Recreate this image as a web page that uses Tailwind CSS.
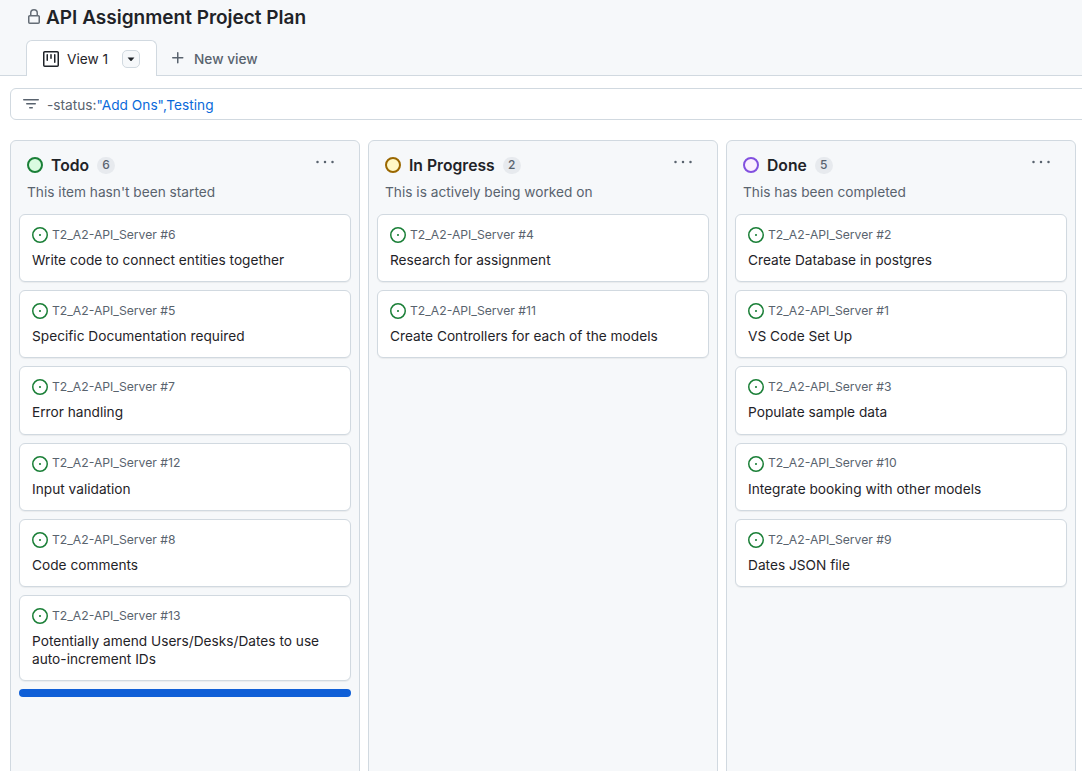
<!DOCTYPE html>
<html><head><meta charset="utf-8"><script src="https://cdn.jsdelivr.net/npm/@tailwindcss/browser@4"></script></head>
<body class="m-0 h-[771px] w-[1082px] overflow-hidden bg-white font-['Inter',sans-serif] text-[#1f2328]">
<header class="h-[76px] border-b border-[#d1d9e0] bg-[#f6f8fa]">
  <div class="flex h-[40px] items-start pl-[26px] pt-[4px]">
    <svg class="mt-[5px] h-[16px] w-[16px] text-[#656d76]" viewBox="0 0 16 16" fill="currentColor"><path d="M4 4a4 4 0 0 1 8 0v2h.25c.966 0 1.75.784 1.75 1.75v5.5A1.75 1.75 0 0 1 12.25 15h-8.5A1.75 1.75 0 0 1 2 13.25v-5.5C2 6.784 2.784 6 3.75 6H4Zm6.5 2V4a2.5 2.5 0 1 0-5 0v2ZM3.5 7.75v5.5c0 .138.112.25.25.25h8.5a.25.25 0 0 0 .25-.25v-5.5a.25.25 0 0 0-.25-.25h-8.5a.25.25 0 0 0-.25.25Z"/></svg>
    <h1 class="ml-[4px] text-[19px] leading-[28px] font-semibold">API Assignment Project Plan</h1>
  </div>
  <div class="flex h-[36px] pl-[26px]">
    <div class="flex h-[36px] w-[131px] items-center rounded-t-[6px] border border-b-0 border-[#d1d9e0] bg-white pl-[16px]">
      <svg class="h-[16px] w-[16px] text-[#1f2328]" viewBox="0 0 16 16" fill="currentColor"><path d="M0 1.75C0 .784.784 0 1.75 0h12.5C15.216 0 16 .784 16 1.75v12.5A1.75 1.75 0 0 1 14.25 16H1.75A1.75 1.75 0 0 1 0 14.25Zm1.75-.25a.25.25 0 0 0-.25.25v12.5c0 .138.112.25.25.25h12.5a.25.25 0 0 0 .25-.25V1.75a.25.25 0 0 0-.25-.25ZM11.75 3a.75.75 0 0 1 .75.75v7.5a.75.75 0 0 1-1.5 0v-7.5a.75.75 0 0 1 .75-.75Zm-8.25.75a.75.75 0 0 1 1.5 0v5.5a.75.75 0 0 1-1.5 0ZM8 3a.75.75 0 0 1 .75.75v3.5a.75.75 0 0 1-1.5 0v-3.5A.75.75 0 0 1 8 3Z"/></svg>
      <span class="ml-[8px] text-[13.7px] leading-[20px]">View 1</span>
      <span class="ml-[14px] flex h-[18px] w-[18px] items-center justify-center rounded-[5px] border border-[#d1d9e0] bg-[#f6f8fa]">
        <svg class="h-[8px] w-[8px] text-[#1f2328]" viewBox="0 0 8 8" fill="currentColor"><path d="M0.6 2.4h6.8L4.4 6h-.8Z"/></svg>
      </span>
    </div>
    <div class="ml-[13px] flex items-center text-[#59636e]">
      <svg class="h-[16px] w-[16px]" viewBox="0 0 16 16" fill="currentColor"><path d="M7.75 2a.75.75 0 0 1 .75.75V7h4.25a.75.75 0 0 1 0 1.5H8.5v4.25a.75.75 0 0 1-1.5 0V8.5H2.75a.75.75 0 0 1 0-1.5H7V2.75A.75.75 0 0 1 7.75 2Z"/></svg>
      <span class="ml-[8px] mt-[2px] text-[13.7px] leading-[20px] font-medium">New view</span>
    </div>
  </div>
</header>
<div class="ml-[10px] mt-[12px] flex h-[32px] w-[1100px] items-center rounded-[6px] border border-[#d1d9e0] bg-white pl-[12px]">
  <svg class="h-[16px] w-[16px] text-[#59636e]" viewBox="0 0 16 16" fill="currentColor"><path d="M.75 3h14.5a.75.75 0 0 1 0 1.5H.75a.75.75 0 0 1 0-1.5ZM3 7.75A.75.75 0 0 1 3.75 7h8.5a.75.75 0 0 1 0 1.5h-8.5A.75.75 0 0 1 3 7.75Zm3 4a.75.75 0 0 1 .75-.75h2.5a.75.75 0 0 1 0 1.5h-2.5a.75.75 0 0 1-.75-.75Z"/></svg>
  <span class="ml-[8px] mt-[2px] text-[13.7px] leading-[20px] text-[#59636e]">-status:<span class="text-[#0969da]">"Add Ons",Testing</span></span>
</div>
<main class="ml-[10px] mt-[20px] flex h-[640px] gap-[8px]">

  <section class="h-[660px] w-[350px] shrink-0 rounded-[6px] border border-[#d1d9e0] bg-[#f6f8fa] px-[8px]">
    <div class="relative box-content flex h-[36px] items-center pl-[8px] pt-[6px]">
      <span class="h-[16px] w-[16px] rounded-full border-2 border-[#1a7f37] bg-[#dafbe1]"></span>
      <span class="ml-[8px] mt-[2px] text-[15.7px] leading-[24px] font-semibold">Todo</span>
      <span class="ml-[8px] flex h-[17px] min-w-[18px] items-center justify-center rounded-full bg-[#e7eaee] px-[5px] text-[12px] font-medium text-[#59636e]">6</span>
      <svg class="absolute right-[17px] top-[13px] h-[16px] w-[18px] text-[#59636e]" viewBox="-1 0 18 16" fill="currentColor"><circle cx="0.5" cy="8" r="1.25"/><circle cx="8" cy="8" r="1.25"/><circle cx="15.5" cy="8" r="1.25"/></svg>
    </div>
    <p class="ml-[8px] mt-[-1px] text-[13.7px] leading-[20px] text-[#59636e]">This item hasn't been started</p>
    <div class="mt-[12px] flex flex-col gap-[8px]">
      <article class="h-[68.2px] rounded-[6px] border border-[#d1d9e0] bg-white px-[12px] pt-[10px] shadow-[0_1px_1px_rgba(31,35,40,0.06)]">
        <div class="flex h-[20px] items-center text-[12.2px] text-[#59636e]"><svg class="h-[16px] w-[16px] text-[#1a7f37]" viewBox="0 0 16 16" fill="currentColor"><path d="M8 9.5a1.5 1.5 0 1 0 0-3 1.5 1.5 0 0 0 0 3Z" transform="translate(8 8) scale(.7) translate(-8 -8)"/><path d="M8 0a8 8 0 1 1 0 16A8 8 0 0 1 8 0ZM1.5 8a6.5 6.5 0 1 0 13 0 6.5 6.5 0 0 0-13 0Z"/></svg><span class="ml-[4px]">T2_A2-API_Server #6</span></div>
        <p class="mt-[6px] text-[13.7px] leading-[18px]">Write code to connect entities together</p>
      </article>
      <article class="h-[68.2px] rounded-[6px] border border-[#d1d9e0] bg-white px-[12px] pt-[10px] shadow-[0_1px_1px_rgba(31,35,40,0.06)]">
        <div class="flex h-[20px] items-center text-[12.2px] text-[#59636e]"><svg class="h-[16px] w-[16px] text-[#1a7f37]" viewBox="0 0 16 16" fill="currentColor"><path d="M8 9.5a1.5 1.5 0 1 0 0-3 1.5 1.5 0 0 0 0 3Z" transform="translate(8 8) scale(.7) translate(-8 -8)"/><path d="M8 0a8 8 0 1 1 0 16A8 8 0 0 1 8 0ZM1.5 8a6.5 6.5 0 1 0 13 0 6.5 6.5 0 0 0-13 0Z"/></svg><span class="ml-[4px]">T2_A2-API_Server #5</span></div>
        <p class="mt-[6px] text-[13.7px] leading-[18px]">Specific Documentation required</p>
      </article>
      <article class="h-[68.2px] rounded-[6px] border border-[#d1d9e0] bg-white px-[12px] pt-[10px] shadow-[0_1px_1px_rgba(31,35,40,0.06)]">
        <div class="flex h-[20px] items-center text-[12.2px] text-[#59636e]"><svg class="h-[16px] w-[16px] text-[#1a7f37]" viewBox="0 0 16 16" fill="currentColor"><path d="M8 9.5a1.5 1.5 0 1 0 0-3 1.5 1.5 0 0 0 0 3Z" transform="translate(8 8) scale(.7) translate(-8 -8)"/><path d="M8 0a8 8 0 1 1 0 16A8 8 0 0 1 8 0ZM1.5 8a6.5 6.5 0 1 0 13 0 6.5 6.5 0 0 0-13 0Z"/></svg><span class="ml-[4px]">T2_A2-API_Server #7</span></div>
        <p class="mt-[6px] text-[13.7px] leading-[18px]">Error handling</p>
      </article>
      <article class="h-[68.2px] rounded-[6px] border border-[#d1d9e0] bg-white px-[12px] pt-[10px] shadow-[0_1px_1px_rgba(31,35,40,0.06)]">
        <div class="flex h-[20px] items-center text-[12.2px] text-[#59636e]"><svg class="h-[16px] w-[16px] text-[#1a7f37]" viewBox="0 0 16 16" fill="currentColor"><path d="M8 9.5a1.5 1.5 0 1 0 0-3 1.5 1.5 0 0 0 0 3Z" transform="translate(8 8) scale(.7) translate(-8 -8)"/><path d="M8 0a8 8 0 1 1 0 16A8 8 0 0 1 8 0ZM1.5 8a6.5 6.5 0 1 0 13 0 6.5 6.5 0 0 0-13 0Z"/></svg><span class="ml-[4px]">T2_A2-API_Server #12</span></div>
        <p class="mt-[6px] text-[13.7px] leading-[18px]">Input validation</p>
      </article>
      <article class="h-[68.2px] rounded-[6px] border border-[#d1d9e0] bg-white px-[12px] pt-[10px] shadow-[0_1px_1px_rgba(31,35,40,0.06)]">
        <div class="flex h-[20px] items-center text-[12.2px] text-[#59636e]"><svg class="h-[16px] w-[16px] text-[#1a7f37]" viewBox="0 0 16 16" fill="currentColor"><path d="M8 9.5a1.5 1.5 0 1 0 0-3 1.5 1.5 0 0 0 0 3Z" transform="translate(8 8) scale(.7) translate(-8 -8)"/><path d="M8 0a8 8 0 1 1 0 16A8 8 0 0 1 8 0ZM1.5 8a6.5 6.5 0 1 0 13 0 6.5 6.5 0 0 0-13 0Z"/></svg><span class="ml-[4px]">T2_A2-API_Server #8</span></div>
        <p class="mt-[6px] text-[13.7px] leading-[18px]">Code comments</p>
      </article>
      <article class="h-[86px] rounded-[6px] border border-[#d1d9e0] bg-white px-[12px] pt-[10px] shadow-[0_1px_1px_rgba(31,35,40,0.06)]">
        <div class="flex h-[20px] items-center text-[12.2px] text-[#59636e]"><svg class="h-[16px] w-[16px] text-[#1a7f37]" viewBox="0 0 16 16" fill="currentColor"><path d="M8 9.5a1.5 1.5 0 1 0 0-3 1.5 1.5 0 0 0 0 3Z" transform="translate(8 8) scale(.7) translate(-8 -8)"/><path d="M8 0a8 8 0 1 1 0 16A8 8 0 0 1 8 0ZM1.5 8a6.5 6.5 0 1 0 13 0 6.5 6.5 0 0 0-13 0Z"/></svg><span class="ml-[4px]">T2_A2-API_Server #13</span></div>
        <p class="mt-[6px] text-[13.7px] leading-[18px]">Potentially amend Users/Desks/Dates to use auto-increment IDs</p>
      </article>
      <div class="h-[8px] rounded-[6px] bg-[#0f5fd7]"></div>
    </div>
  </section>

  <section class="h-[660px] w-[350px] shrink-0 rounded-[6px] border border-[#d1d9e0] bg-[#f6f8fa] px-[8px]">
    <div class="relative box-content flex h-[36px] items-center pl-[8px] pt-[6px]">
      <span class="h-[16px] w-[16px] rounded-full border-2 border-[#9a6700] bg-[#fff8c5]"></span>
      <span class="ml-[8px] mt-[2px] text-[15.7px] leading-[24px] font-semibold">In Progress</span>
      <span class="ml-[8px] flex h-[17px] min-w-[18px] items-center justify-center rounded-full bg-[#e7eaee] px-[5px] text-[12px] font-medium text-[#59636e]">2</span>
      <svg class="absolute right-[17px] top-[13px] h-[16px] w-[18px] text-[#59636e]" viewBox="-1 0 18 16" fill="currentColor"><circle cx="0.5" cy="8" r="1.25"/><circle cx="8" cy="8" r="1.25"/><circle cx="15.5" cy="8" r="1.25"/></svg>
    </div>
    <p class="ml-[8px] mt-[-1px] text-[13.7px] leading-[20px] text-[#59636e]">This is actively being worked on</p>
    <div class="mt-[12px] flex flex-col gap-[8px]">
      <article class="h-[68.2px] rounded-[6px] border border-[#d1d9e0] bg-white px-[12px] pt-[10px] shadow-[0_1px_1px_rgba(31,35,40,0.06)]">
        <div class="flex h-[20px] items-center text-[12.2px] text-[#59636e]"><svg class="h-[16px] w-[16px] text-[#1a7f37]" viewBox="0 0 16 16" fill="currentColor"><path d="M8 9.5a1.5 1.5 0 1 0 0-3 1.5 1.5 0 0 0 0 3Z" transform="translate(8 8) scale(.7) translate(-8 -8)"/><path d="M8 0a8 8 0 1 1 0 16A8 8 0 0 1 8 0ZM1.5 8a6.5 6.5 0 1 0 13 0 6.5 6.5 0 0 0-13 0Z"/></svg><span class="ml-[4px]">T2_A2-API_Server #4</span></div>
        <p class="mt-[6px] text-[13.7px] leading-[18px]">Research for assignment</p>
      </article>
      <article class="h-[68.2px] rounded-[6px] border border-[#d1d9e0] bg-white px-[12px] pt-[10px] shadow-[0_1px_1px_rgba(31,35,40,0.06)]">
        <div class="flex h-[20px] items-center text-[12.2px] text-[#59636e]"><svg class="h-[16px] w-[16px] text-[#1a7f37]" viewBox="0 0 16 16" fill="currentColor"><path d="M8 9.5a1.5 1.5 0 1 0 0-3 1.5 1.5 0 0 0 0 3Z" transform="translate(8 8) scale(.7) translate(-8 -8)"/><path d="M8 0a8 8 0 1 1 0 16A8 8 0 0 1 8 0ZM1.5 8a6.5 6.5 0 1 0 13 0 6.5 6.5 0 0 0-13 0Z"/></svg><span class="ml-[4px]">T2_A2-API_Server #11</span></div>
        <p class="mt-[6px] text-[13.7px] leading-[18px]">Create Controllers for each of the models</p>
      </article>
    </div>
  </section>

  <section class="h-[660px] w-[350px] shrink-0 rounded-[6px] border border-[#d1d9e0] bg-[#f6f8fa] px-[8px]">
    <div class="relative box-content flex h-[36px] items-center pl-[8px] pt-[6px]">
      <span class="h-[16px] w-[16px] rounded-full border-2 border-[#8250df] bg-[#fbefff]"></span>
      <span class="ml-[8px] mt-[2px] text-[15.7px] leading-[24px] font-semibold">Done</span>
      <span class="ml-[8px] flex h-[17px] min-w-[18px] items-center justify-center rounded-full bg-[#e7eaee] px-[5px] text-[12px] font-medium text-[#59636e]">5</span>
      <svg class="absolute right-[17px] top-[13px] h-[16px] w-[18px] text-[#59636e]" viewBox="-1 0 18 16" fill="currentColor"><circle cx="0.5" cy="8" r="1.25"/><circle cx="8" cy="8" r="1.25"/><circle cx="15.5" cy="8" r="1.25"/></svg>
    </div>
    <p class="ml-[8px] mt-[-1px] text-[13.7px] leading-[20px] text-[#59636e]">This has been completed</p>
    <div class="mt-[12px] flex flex-col gap-[8px]">
      <article class="h-[68.2px] rounded-[6px] border border-[#d1d9e0] bg-white px-[12px] pt-[10px] shadow-[0_1px_1px_rgba(31,35,40,0.06)]">
        <div class="flex h-[20px] items-center text-[12.2px] text-[#59636e]"><svg class="h-[16px] w-[16px] text-[#1a7f37]" viewBox="0 0 16 16" fill="currentColor"><path d="M8 9.5a1.5 1.5 0 1 0 0-3 1.5 1.5 0 0 0 0 3Z" transform="translate(8 8) scale(.7) translate(-8 -8)"/><path d="M8 0a8 8 0 1 1 0 16A8 8 0 0 1 8 0ZM1.5 8a6.5 6.5 0 1 0 13 0 6.5 6.5 0 0 0-13 0Z"/></svg><span class="ml-[4px]">T2_A2-API_Server #2</span></div>
        <p class="mt-[6px] text-[13.7px] leading-[18px]">Create Database in postgres</p>
      </article>
      <article class="h-[68.2px] rounded-[6px] border border-[#d1d9e0] bg-white px-[12px] pt-[10px] shadow-[0_1px_1px_rgba(31,35,40,0.06)]">
        <div class="flex h-[20px] items-center text-[12.2px] text-[#59636e]"><svg class="h-[16px] w-[16px] text-[#1a7f37]" viewBox="0 0 16 16" fill="currentColor"><path d="M8 9.5a1.5 1.5 0 1 0 0-3 1.5 1.5 0 0 0 0 3Z" transform="translate(8 8) scale(.7) translate(-8 -8)"/><path d="M8 0a8 8 0 1 1 0 16A8 8 0 0 1 8 0ZM1.5 8a6.5 6.5 0 1 0 13 0 6.5 6.5 0 0 0-13 0Z"/></svg><span class="ml-[4px]">T2_A2-API_Server #1</span></div>
        <p class="mt-[6px] text-[13.7px] leading-[18px]">VS Code Set Up</p>
      </article>
      <article class="h-[68.2px] rounded-[6px] border border-[#d1d9e0] bg-white px-[12px] pt-[10px] shadow-[0_1px_1px_rgba(31,35,40,0.06)]">
        <div class="flex h-[20px] items-center text-[12.2px] text-[#59636e]"><svg class="h-[16px] w-[16px] text-[#1a7f37]" viewBox="0 0 16 16" fill="currentColor"><path d="M8 9.5a1.5 1.5 0 1 0 0-3 1.5 1.5 0 0 0 0 3Z" transform="translate(8 8) scale(.7) translate(-8 -8)"/><path d="M8 0a8 8 0 1 1 0 16A8 8 0 0 1 8 0ZM1.5 8a6.5 6.5 0 1 0 13 0 6.5 6.5 0 0 0-13 0Z"/></svg><span class="ml-[4px]">T2_A2-API_Server #3</span></div>
        <p class="mt-[6px] text-[13.7px] leading-[18px]">Populate sample data</p>
      </article>
      <article class="h-[68.2px] rounded-[6px] border border-[#d1d9e0] bg-white px-[12px] pt-[10px] shadow-[0_1px_1px_rgba(31,35,40,0.06)]">
        <div class="flex h-[20px] items-center text-[12.2px] text-[#59636e]"><svg class="h-[16px] w-[16px] text-[#1a7f37]" viewBox="0 0 16 16" fill="currentColor"><path d="M8 9.5a1.5 1.5 0 1 0 0-3 1.5 1.5 0 0 0 0 3Z" transform="translate(8 8) scale(.7) translate(-8 -8)"/><path d="M8 0a8 8 0 1 1 0 16A8 8 0 0 1 8 0ZM1.5 8a6.5 6.5 0 1 0 13 0 6.5 6.5 0 0 0-13 0Z"/></svg><span class="ml-[4px]">T2_A2-API_Server #10</span></div>
        <p class="mt-[6px] text-[13.7px] leading-[18px]">Integrate booking with other models</p>
      </article>
      <article class="h-[68.2px] rounded-[6px] border border-[#d1d9e0] bg-white px-[12px] pt-[10px] shadow-[0_1px_1px_rgba(31,35,40,0.06)]">
        <div class="flex h-[20px] items-center text-[12.2px] text-[#59636e]"><svg class="h-[16px] w-[16px] text-[#1a7f37]" viewBox="0 0 16 16" fill="currentColor"><path d="M8 9.5a1.5 1.5 0 1 0 0-3 1.5 1.5 0 0 0 0 3Z" transform="translate(8 8) scale(.7) translate(-8 -8)"/><path d="M8 0a8 8 0 1 1 0 16A8 8 0 0 1 8 0ZM1.5 8a6.5 6.5 0 1 0 13 0 6.5 6.5 0 0 0-13 0Z"/></svg><span class="ml-[4px]">T2_A2-API_Server #9</span></div>
        <p class="mt-[6px] text-[13.7px] leading-[18px]">Dates JSON file</p>
      </article>
    </div>
  </section>
</main>
</body></html>
